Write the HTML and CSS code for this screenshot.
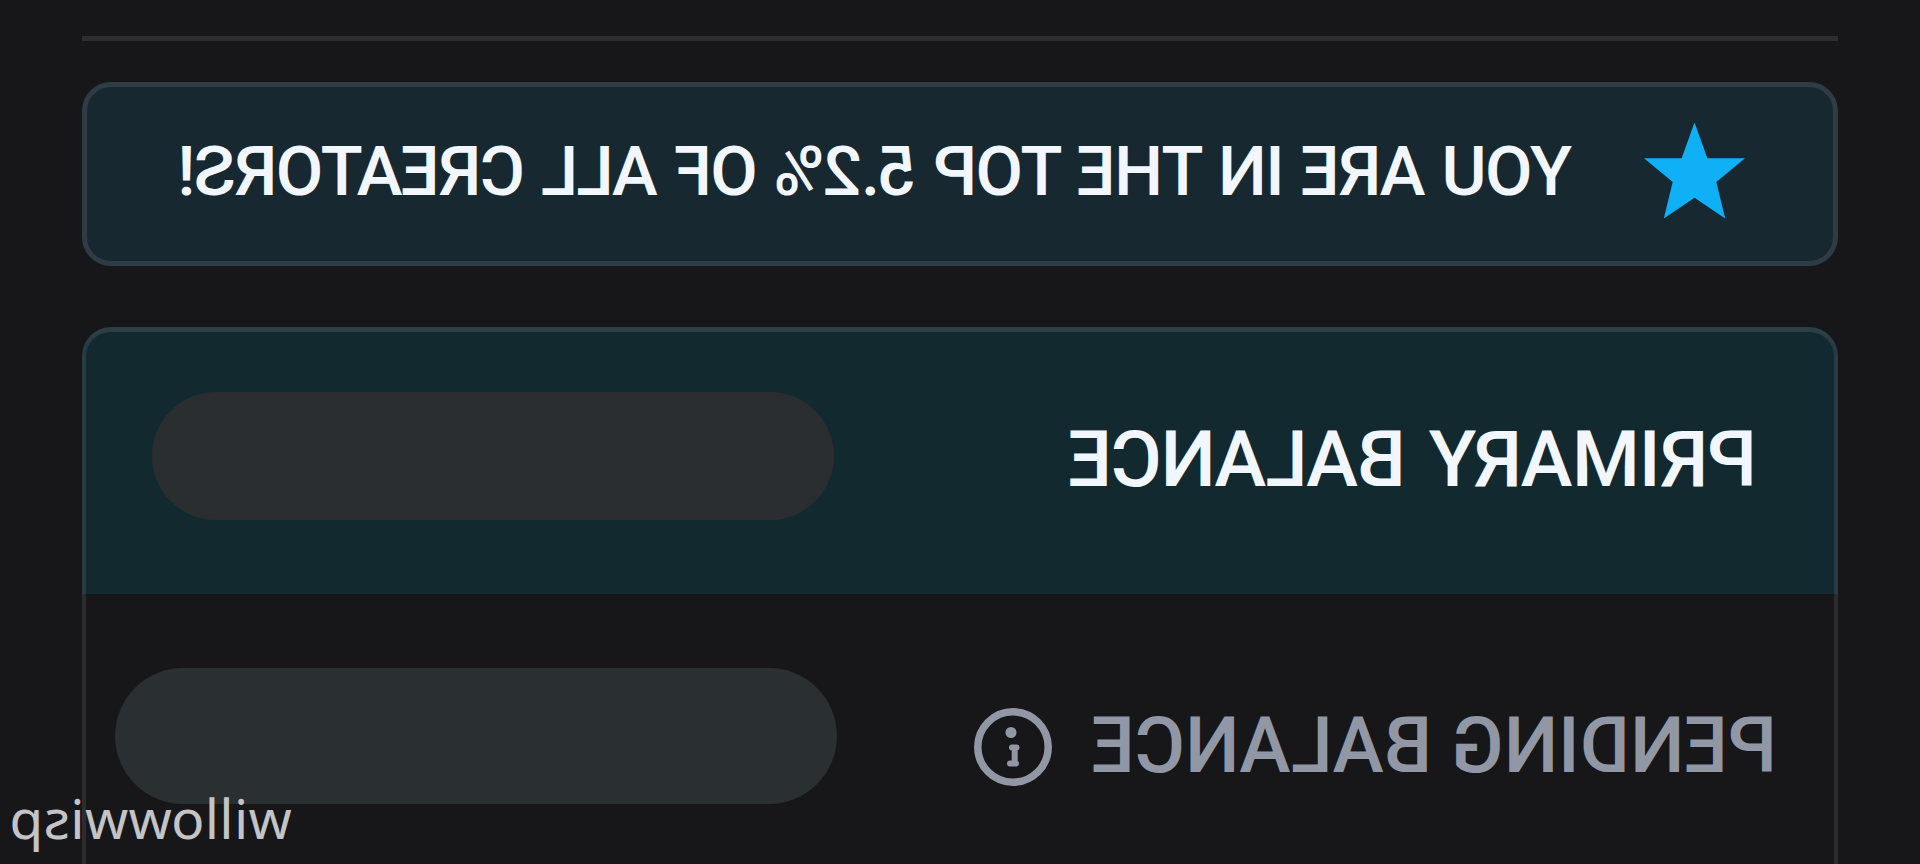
FILE: index.html
```
<!DOCTYPE html>
<html lang="en">
<head>
    <meta charset="UTF-8">
    <meta name="viewport" content="width=device-width, initial-scale=1.0">
    <title>Balance</title>
    <link rel="stylesheet" href="styles.css">
</head>
<body>
<div class="wrap">
    <hr class="line">
    <div class="rank">
        <svg class="star" viewBox="0 0 102 98"><path d="M51 0L64 36H102L73 60L82 97L51 76L20 97L29 60L0 36H38Z"/></svg>
        <p class="rank-txt">YOU ARE IN THE TOP 5.2% OF ALL CREATORS!</p>
    </div>
    <div class="balance">
        <div class="row primary">
            <p class="tit">PRIMARY BALANCE</p>
            <div class="pill"></div>
        </div>
        <div class="row pending">
            <p class="tit">PENDING BALANCE</p>
            <svg class="info" viewBox="0 0 78 78">
                <circle cx="39" cy="39" r="35.2"/>
                <circle class="dot" cx="41" cy="24.5" r="5.5"/>
                <path d="M35.5 39.5H40M37.3 40V55M36 55.5H42"/>
            </svg>
            <div class="pill"></div>
        </div>
    </div>
    <span class="name">willowwisp</span>
</div>
</body>
</html>
```
FILE: styles.css
```
body {margin: 0; background-color: #17171a;}
p {margin: 0;}

/* whole screen is flipped, like a front camera view */
.wrap {position: relative; box-sizing: border-box; padding: 36px 82px 0; width: 1920px; height: 864px; overflow: hidden; transform: scaleX(-1); font-family: Roboto, sans-serif; font-weight: 500;}
.line {margin: 0; height: 5px; border: 0; background: #2d2d2f;}

.rank {display: flex; align-items: flex-start; box-sizing: border-box; margin-top: 41px; height: 184px; border: 5px solid #2f3b45; border-radius: 29px; background: #172831;}
.star {flex: none; margin: 35px 0 0 88px; width: 101px; height: 98px; fill: #0fb0f6;}
.rank-txt {margin: 50px 0 0 72px; font-size: 69px; line-height: 1; letter-spacing: -1.7px; word-spacing: 2.3px; color: #f2f6fe; white-space: nowrap;}

.balance {margin-top: 61px;}
.row {display: flex; align-items: flex-start; box-sizing: border-box; border: 4px solid #2c2b30; border-top: 0; border-bottom: 0;}
.tit {line-height: 1; white-space: nowrap;}
.pill {flex: none; margin-left: auto; background: #2a2e31;}

.primary {height: 267px; border-color: #2b3b45; border-top: 5px solid #2c3e46; border-radius: 29px 29px 0 0; background: #12292f;}
.primary .tit {margin: 89px 0 0 77px; font-size: 78px; letter-spacing: -1.35px; word-spacing: 6px; color: #f2f6fe;}
.primary .pill {margin-top: 60px; margin-right: 66px; width: 682px; height: 128px; border-radius: 64px;}

.pending {height: 271px;}
.pending .tit {margin: 114px 0 0 57px; font-size: 77px; letter-spacing: -.1px; color: #9197a5;}
.pending .pill {margin-top: 74px; margin-right: 29px; width: 722px; height: 136px; border-radius: 68px; background: #2a2f31;}
.info {flex: none; margin: 114px 0 0 39px; width: 78px; height: 78px; fill: none; stroke: #9197a5; stroke-width: 7.5;}
.info path {stroke-width: 6; stroke-linejoin: round; stroke-linecap: round;}
.info .dot {fill: #9197a5; stroke: none;}

.name {position: absolute; right: 9px; bottom: 11px; font: 400 55px/1.25 'Noto Sans', sans-serif; letter-spacing: .4px; color: #c4c4c6;}
```
